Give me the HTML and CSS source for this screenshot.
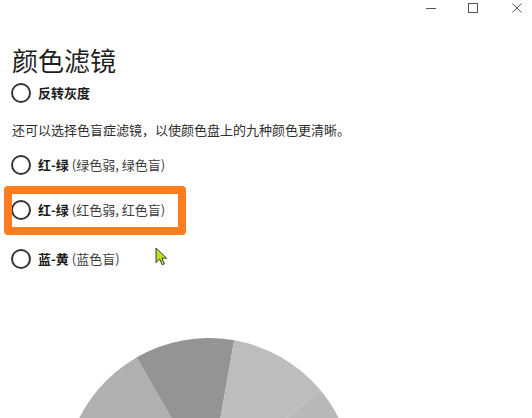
FILE: index.html
```html
<!DOCTYPE html>
<html lang="zh-CN">
<head>
<meta charset="utf-8">
<title>颜色滤镜</title>
<link rel="stylesheet" href="styles.css">
</head>
<body>
<div class="titlebar">
  <svg class="ctl ctl-min" width="10" height="10" viewBox="0 0 10 10"><path d="M0 5.5H10" stroke="#555" stroke-width="1"/></svg>
  <svg class="ctl ctl-max" width="10" height="10" viewBox="0 0 10 10"><rect x="0.5" y="0.5" width="9" height="9" fill="none" stroke="#555" stroke-width="1"/></svg>
  <svg class="ctl ctl-close" width="10" height="10" viewBox="0 0 10 10"><path d="M0.5 0.5L9.5 9.5M9.5 0.5L0.5 9.5" stroke="#555" stroke-width="1"/></svg>
</div>
<main class="content">
  <h1 class="title">颜色滤镜</h1>
  <div class="radio row-gray"><span class="dot"></span><span class="label"><b>反转灰度</b></span></div>
  <p class="desc">还可以选择色盲症滤镜，以使颜色盘上的九种颜色更清晰。</p>
  <div class="radio row-rg1"><span class="dot"></span><span class="label"><b>红-绿</b> <span class="sub">(绿色弱, 绿色盲)</span></span></div>
  <div class="radio row-rg2"><span class="highlight"></span><span class="dot"></span><span class="label"><b>红-绿</b> <span class="sub">(红色弱, 红色盲)</span></span>
  </div>
  <div class="radio row-by"><span class="dot"></span><span class="label"><b>蓝-黄</b> <span class="sub">(蓝色盲)</span></span>
    <svg class="cursor" width="13" height="19" viewBox="0 0 13 19"><path d="M1 1L1 15.5L4.6 12L7.2 17.8L9.4 16.8L6.9 11.2L11.6 11.2Z" fill="#b6e41f" stroke="#3a3a3a" stroke-width="1" stroke-linejoin="round"/></svg>
  </div>
  <svg class="wheel" width="290" height="80" viewBox="0 0 290 80">
    <path d="M145 145L8.7 95.4A145 145 0 0 1 72.5 19.4Z" fill="#b0b0b0"/>
    <path d="M145 145L72.5 19.4A145 145 0 0 1 170.2 2.2Z" fill="#949494"/>
    <path d="M145 145L170.2 2.2A145 145 0 0 1 256.1 51.8Z" fill="#bdbdbd"/>
    <path d="M145 145L256.1 51.8A145 145 0 0 1 290 145Z" fill="#b9b9b9"/>
  </svg>
</main>
</body>
</html>
```
FILE: styles.css
```css
html, body {
  margin: 0;
  padding: 0;
  background: #ffffff;
}
body {
  width: 532px;
  height: 418px;
  overflow: hidden;
  font-family: "Noto Sans CJK SC", "Noto Sans", sans-serif;
  color: #1f1f1f;
}
.titlebar {
  height: 16px;
  box-sizing: border-box;
  padding-top: 3px;
  display: flex;
  justify-content: flex-end;
  padding-right: 10px;
}
.ctl { display: block; }
.ctl-max { margin-left: 32px; }
.ctl-close { margin-left: 34px; }
.content {
  padding: 0 12px;
}
.title {
  margin: 27px 0 0 0;
  height: 34px;
  line-height: 34px;
  font-size: 26px;
  font-weight: 400;
  color: #1e1e1e;
}
.radio {
  display: flex;
  align-items: center;
  height: 24px;
  font-size: 13px;
  line-height: 24px;
  position: relative;
}
.dot {
  width: 20px;
  height: 20px;
  box-sizing: border-box;
  border: 2px solid #363636;
  border-radius: 50%;
  margin-left: -1px;
  margin-right: 7px;
  flex: none;
}
.label b {
  font-weight: 700;
  color: #1c1c1c;
}
.sub {
  color: #3c3c3c;
}
.row-gray { margin-top: 4px; }
.desc {
  margin: 15px 0 0 0;
  height: 20px;
  line-height: 20px;
  font-size: 13px;
  color: #2e2e2e;
  white-space: nowrap;
}
.row-rg1 { margin-top: 13px; }
.row-rg2 { margin-top: 21px; }
.row-by { margin-top: 25px; }
.highlight {
  position: absolute;
  left: -8px;
  top: -12px;
  width: 182px;
  height: 49px;
  box-sizing: border-box;
  border: 8px solid #fe7d1e;
  border-radius: 4px;
}
.cursor {
  position: absolute;
  left: 143px;
  top: 0px;
}
.wheel {
  display: block;
  margin-top: 67px;
  margin-left: 52px;
}
```
